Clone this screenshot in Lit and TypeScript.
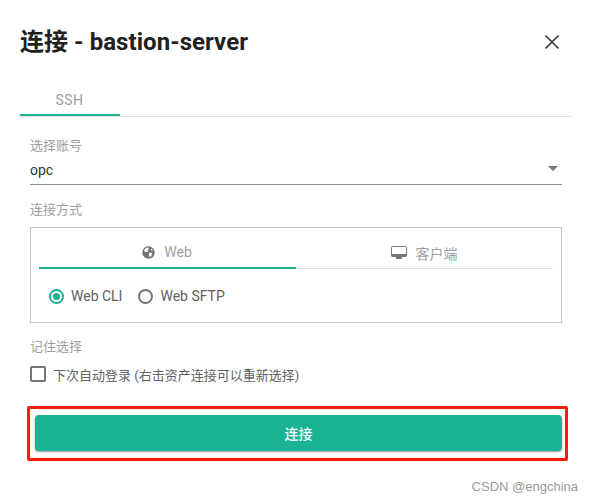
import { LitElement, html, css } from "lit";
import { customElement } from "lit/decorators.js";

@customElement("app-root")
export class AppRoot extends LitElement {
  static styles = css`
    :host {
      display: block;
      width: 593px;
      height: 503px;
      background: #fff;
      box-sizing: border-box;
      font-family: Roboto, "Noto Sans CJK SC", sans-serif;
      overflow: hidden;
    }
    .header {
      display: flex;
      justify-content: space-between;
      align-items: center;
      padding: 25px 33px 0 20px;
      height: 32px;
    }
    .title {
      font-size: 24px;
      font-weight: 700;
      color: #212121;
      line-height: 32px;
      margin-top: 1px;
      letter-spacing: 0.05px;
    }
    .close {
      display: block;
      width: 16px;
      height: 16px;
      margin-top: 1px;
    }
    .tabs {
      margin: 35px 21px 0 20px;
      height: 24px;
      border-bottom: 1px solid #e0e0e0;
      display: flex;
    }
    .tab {
      width: 100px;
      height: 24px;
      box-sizing: border-box;
      border-bottom: 2px solid #1ab394;
      font-size: 14px;
      line-height: 16px;
      color: #9e9e9e;
      text-align: center;
      padding-right: 1px;
      letter-spacing: 0.4px;
    }
    .body {
      padding: 20px 31px 0 30px;
    }
    .label {
      font-size: 13px;
      line-height: 18px;
      color: #9e9e9e;
      height: 18px;
    }
    .select {
      margin-top: 1px;
      height: 29px;
      box-sizing: border-box;
      border-bottom: 1px solid #8c8c8c;
      display: flex;
      justify-content: space-between;
      align-items: center;
      padding-bottom: 1px;
      font-size: 14px;
      color: #333;
    }
    .arrow {
      width: 0;
      height: 0;
      border-left: 5px solid transparent;
      border-right: 5px solid transparent;
      border-top: 5px solid #757575;
      margin-right: 4px;
      margin-bottom: 2px;
    }
    .label.method {
      margin-top: 16px;
    }
    .box {
      margin-top: 8px;
      height: 96px;
      box-sizing: border-box;
      border: 1px solid #c8c8c8;
      padding: 0 8px;
    }
    .inner-tabs {
      display: grid;
      grid-template-columns: 257px 1fr;
      height: 41px;
      box-sizing: border-box;
      border-bottom: 1px solid #e0e0e0;
    }
    .inner-tab {
      height: 41px;
      box-sizing: border-box;
      display: flex;
      align-items: center;
      justify-content: center;
      gap: 9px;
      padding-top: 8px;
      font-size: 14px;
      color: #9e9e9e;
    }
    .inner-tab.active {
      border-bottom: 2px solid #1ab394;
      padding-top: 9px;
      padding-right: 1px;
    }
    .inner-tab.client {
      padding-right: 1px;
    }
    .inner-tab svg {
      display: block;
      flex: none;
    }
    .radios {
      display: flex;
      align-items: center;
      padding: 19px 0 0 10px;
      font-size: 14px;
      color: #616161;
    }
    .radio-svg {
      display: block;
      width: 15px;
      height: 15px;
      margin-right: 7px;
    }
    .radio-label {
      margin-right: 16px;
      line-height: 16px;
    }
    .label.remember {
      margin-top: 15px;
    }
    .check-row {
      display: flex;
      align-items: center;
      margin-top: 7px;
      height: 22px;
      font-size: 13px;
      color: #616161;
    }
    .checkbox {
      width: 16px;
      height: 16px;
      box-sizing: border-box;
      border: 2px solid #757575;
      border-radius: 2px;
      margin-right: 7px;
    }
    .highlight {
      margin: 21px 25px 0 27px;
      box-sizing: border-box;
      height: 55px;
      border: 3px solid #fa1a0e;
      border-radius: 2px;
      padding: 6px 3px 6px 5px;
    }
    .connect {
      height: 36px;
      background: #1ab394;
      border-radius: 4px;
      box-shadow: 0 1px 2px rgba(0, 0, 0, 0.4);
      color: #fff;
      font-size: 14px;
      font-weight: 500;
      display: flex;
      align-items: center;
      justify-content: center;
      font-family: inherit;
    }
    .watermark {
      display: flex;
      justify-content: flex-end;
      padding: 17px 15px 0 0;
      font-size: 13px;
      line-height: 18px;
      color: #9a9a9a;
      font-family: "Liberation Sans", sans-serif;
    }
  `;

  render() {
    return html`
      <div class="header">
        <div class="title">连接 - bastion-server</div>
        <svg class="close" viewBox="0 0 16 16" fill="none" stroke="#333" stroke-width="1.6">
          <path d="M1.5 1.5L14.5 14.5M14.5 1.5L1.5 14.5"></path>
        </svg>
      </div>
      <div class="tabs"><div class="tab">SSH</div></div>
      <div class="body">
        <div class="label">选择账号</div>
        <div class="select"><span>opc</span><span class="arrow"></span></div>
        <div class="label method">连接方式</div>
        <div class="box">
          <div class="inner-tabs">
            <div class="inner-tab active">
              <svg width="13" height="13" viewBox="0 0 13 13">
                <circle cx="6.5" cy="6.5" r="6.2" fill="#757575"></circle>
                <path d="M3.2 2.4L6 1.6L7 3L5.4 4.6L5.8 6L3.6 6L2 4.4ZM7.4 6.4L10 7L9.6 9.4L7.8 11.2L7 9ZM9.2 2.6L11 4.2L10 4.8L8.8 3.8Z" fill="#fff"></path>
              </svg>
              <span>Web</span>
            </div>
            <div class="inner-tab client">
              <svg width="16" height="14" viewBox="0 0 16 14">
                <path d="M1.5 0.5H14.5A1 1 0 0 1 15.5 1.5V9.5A1 1 0 0 1 14.5 10.5H1.5A1 1 0 0 1 0.5 9.5V1.5A1 1 0 0 1 1.5 0.5Z" fill="none" stroke="#757575"></path>
                <path d="M0.5 8H15.5V9.5A1 1 0 0 1 14.5 10.5H1.5A1 1 0 0 1 0.5 9.5Z" fill="#757575"></path>
                <path d="M5.5 10.5H10.5L11 13H5Z" fill="#757575"></path>
              </svg>
              <span>客户端</span>
            </div>
          </div>
          <div class="radios">
            <svg class="radio-svg" viewBox="0 0 15 15">
              <circle cx="7.5" cy="7.5" r="6.5" fill="none" stroke="#1ab394" stroke-width="2"></circle>
              <circle cx="7.5" cy="7.5" r="3.6" fill="#1ab394"></circle>
            </svg>
            <span class="radio-label">Web CLI</span>
            <svg class="radio-svg" viewBox="0 0 15 15">
              <circle cx="7.5" cy="7.5" r="6.5" fill="none" stroke="#757575" stroke-width="2"></circle>
            </svg>
            <span class="radio-label">Web SFTP</span>
          </div>
        </div>
        <div class="label remember">记住选择</div>
        <div class="check-row">
          <span class="checkbox"></span>
          <span>下次自动登录 (右击资产连接可以重新选择)</span>
        </div>
      </div>
      <div class="highlight"><div class="connect">连接</div></div>
      <div class="watermark">CSDN @engchina</div>
    `;
  }
}
